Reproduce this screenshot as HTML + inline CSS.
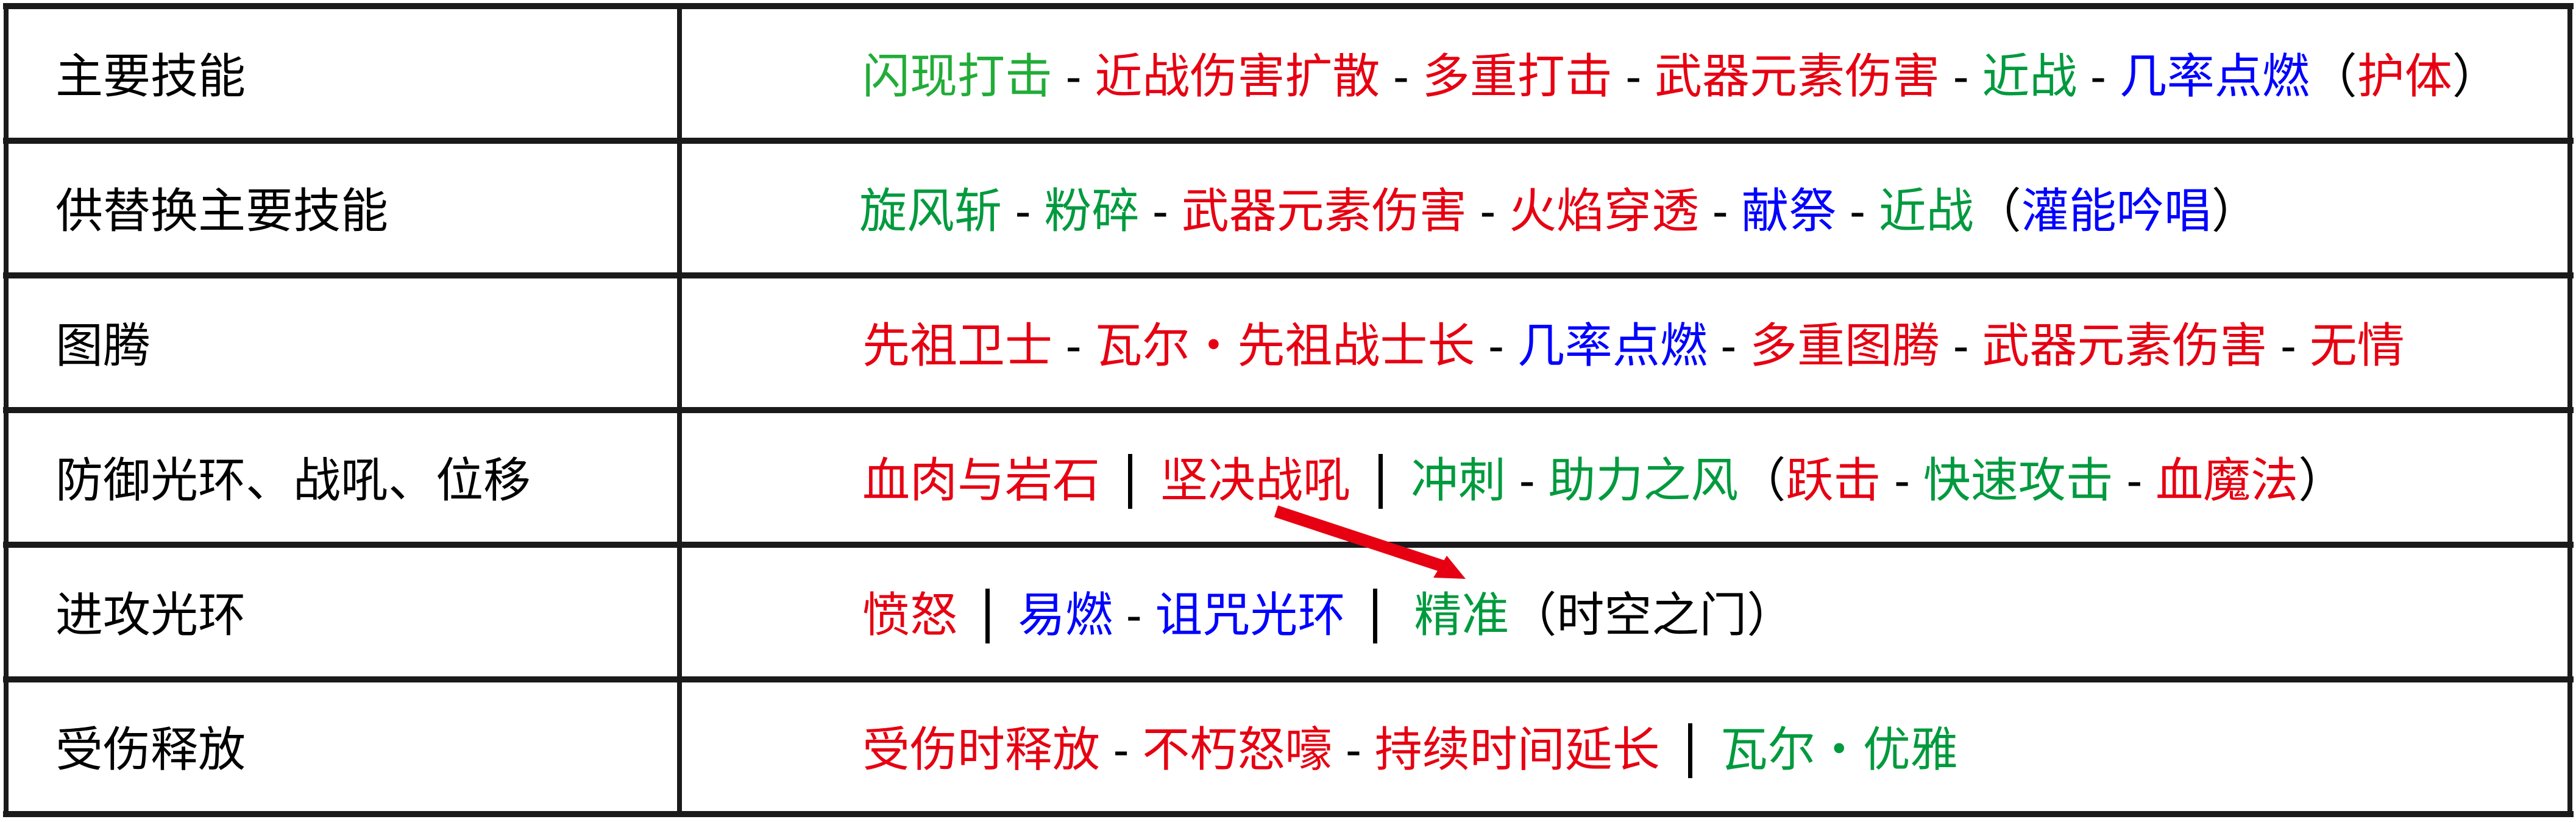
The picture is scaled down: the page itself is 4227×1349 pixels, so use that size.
<!DOCTYPE html>
<html><head><meta charset="utf-8"><style>
html,body{margin:0;padding:0;background:#fff;}
body{width:4227px;height:1349px;position:relative;overflow:hidden;font-family:"Liberation Sans","Noto Sans CJK SC",sans-serif;}
.h{position:absolute;left:5px;width:4218px;height:10px;background:#1a1a1a;}
.v{position:absolute;top:5px;height:1336px;width:8px;background:#1a1a1a;}
.t{position:absolute;font-size:78px;line-height:90px;white-space:nowrap;color:#000;}
.r{color:#e60012}.g{color:#009a3e}.G{color:#22ac38}.b{color:#0000ff}
.bar{display:inline-block;width:7px;height:90px;background:#000;vertical-align:middle;margin:0 46px;position:relative;top:-4px}
</style></head><body>
<div class="h" style="top:5px"></div>
<div class="h" style="top:226px"></div>
<div class="h" style="top:447px"></div>
<div class="h" style="top:668px"></div>
<div class="h" style="top:889px"></div>
<div class="h" style="top:1110px"></div>
<div class="h" style="top:1331px"></div>
<div class="v" style="left:6px"></div>
<div class="v" style="left:1111px"></div>
<div class="v" style="left:4213px"></div>

<div class="t" style="left:91px;top:80px">主要技能</div>
<div class="t" style="left:91px;top:301px">供替换主要技能</div>
<div class="t" style="left:91px;top:522px">图腾</div>
<div class="t" style="left:91px;top:743px">防御光环、战吼、位移</div>
<div class="t" style="left:91px;top:964px">进攻光环</div>
<div class="t" style="left:91px;top:1185px">受伤释放</div>

<div class="t" style="left:1415px;top:80px"><span class="G">闪现打击</span> - <span class="r">近战伤害扩散</span> - <span class="r">多重打击</span> - <span class="r">武器元素伤害</span> - <span class="g">近战</span> - <span class="b">几率点燃</span>（<span class="r">护体</span>）</div>
<div class="t" style="left:1410px;top:301px"><span class="g">旋风斩</span> - <span class="g">粉碎</span> - <span class="r">武器元素伤害</span> - <span class="r">火焰穿透</span> - <span class="b">献祭</span> - <span class="g">近战</span>（<span class="b">灌能吟唱</span>）</div>
<div class="t" style="left:1415px;top:522px"><span class="r">先祖卫士</span> - <span class="r">瓦尔・先祖战士长</span> - <span class="b">几率点燃</span> - <span class="r">多重图腾</span> - <span class="r">武器元素伤害</span> - <span class="r">无情</span></div>
<div class="t" style="left:1415px;top:743px"><span class="r">血肉与岩石</span><span class="bar"></span><span class="r">坚决战吼</span><span class="bar"></span><span class="g">冲刺</span> - <span class="g">助力之风</span>（<span class="r">跃击</span> - <span class="g">快速攻击</span> - <span class="r">血魔法</span>）</div>
<div class="t" style="left:1415px;top:964px"><span class="r">愤怒</span><span class="bar"></span><span class="b">易燃</span> - <span class="b">诅咒光环</span><span class="bar" style="margin-right:60px"></span><span class="g">精准</span>（时空之门）</div>
<div class="t" style="left:1415px;top:1185px"><span class="r">受伤时释放</span> - <span class="r">不朽怒嚎</span> - <span class="r">持续时间延长</span><span class="bar"></span><span class="g">瓦尔・优雅</span></div>

<svg style="position:absolute;left:0;top:0" width="4227" height="1349">
<line x1="2094" y1="839" x2="2370" y2="930" stroke="#e60012" stroke-width="20"/>
<polygon points="2405,950 2352,948 2374,912" fill="#e60012"/>
</svg>
</body></html>
